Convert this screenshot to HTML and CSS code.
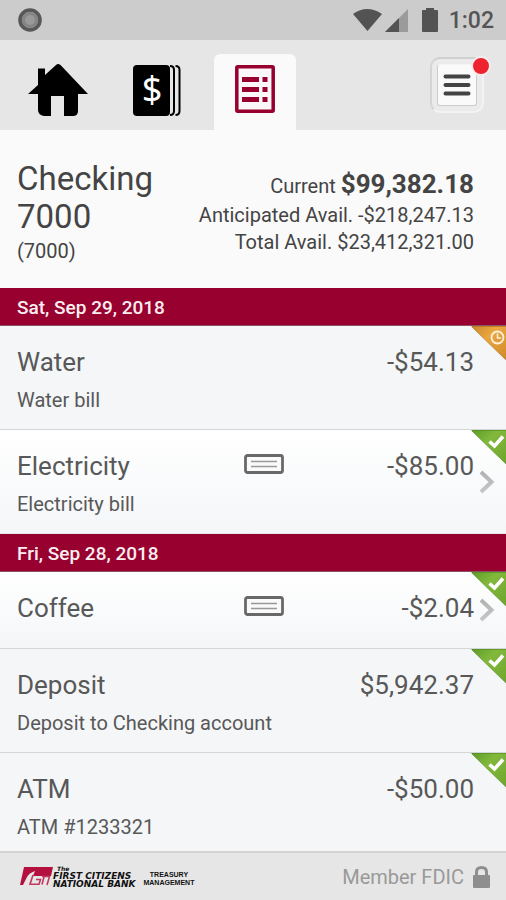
FILE: index.html
```html
<!DOCTYPE html>
<html lang="en">
<head>
<meta charset="utf-8">
<meta name="viewport" content="width=device-width, initial-scale=1">
<title>Checking 7000</title>
<link rel="stylesheet" href="styles.css">
</head>
<body>
<svg class="defs" aria-hidden="true">
  <defs>
    <linearGradient id="green" x1="0" y1="0" x2="1" y2="1"><stop offset="0" stop-color="#5c9a28"/><stop offset=".4" stop-color="#82b93c"/><stop offset="1" stop-color="#6fa52c"/></linearGradient>
    <linearGradient id="orange" x1="0" y1="0" x2="1" y2="1"><stop offset="0" stop-color="#c8862c"/><stop offset=".4" stop-color="#eba63f"/><stop offset="1" stop-color="#d08a2a"/></linearGradient>
    <linearGradient id="grey" x1="0" y1="0" x2="0" y2="1"><stop offset="0" stop-color="#b2b2b2"/><stop offset="1" stop-color="#c6c6c6"/></linearGradient>
    <symbol id="cleared" viewBox="0 0 35 35">
      <path d="M0 0H35V34Z" fill="url(#green)"/>
      <path d="M1 .5H35M1 1L35 34" fill="none" stroke="#4e8a20" stroke-opacity=".6"/>
      <path d="M18.500 11.500L23.500 16L32 6.500" fill="none" stroke="#fff" stroke-width="3.600"/>
    </symbol>
    <symbol id="pending" viewBox="0 0 35 35">
      <path d="M0 0H35V34Z" fill="url(#orange)"/>
      <path d="M1 .5H35M1 1L35 34" fill="none" stroke="#a8701f" stroke-opacity=".6"/>
      <circle cx="26.500" cy="11.500" r="6" fill="none" stroke="#fdf1dc" stroke-width="1.800"/>
      <path d="M26.500 7.500V12H30" fill="none" stroke="#fdf1dc" stroke-width="1.500"/>
    </symbol>
    <symbol id="check" viewBox="0 0 40 20">
      <rect x="1.500" y="1.500" width="37" height="17" rx="2" fill="#fafafa" stroke="#696969" stroke-width="2.800"/>
      <path d="M7 7.500H33M7 12.500H33" stroke="#999" stroke-width="1.700"/>
    </symbol>
    <symbol id="chevron" viewBox="0 0 16 24">
      <path d="M2 2L12.500 12L2 22" fill="none" stroke="url(#grey)" stroke-width="4"/>
    </symbol>
  </defs>
</svg>

<header>
  <div class="status">
    <svg width="24" height="24" viewBox="0 0 24 24" aria-hidden="true"><circle cx="12" cy="12" r="10" fill="#999" stroke="#585858" stroke-width="3.600"/><circle cx="12" cy="12" r="6.500" fill="none" stroke="#858585" stroke-width="3"/></svg>
    <div class="signals">
      <svg width="88" height="24" viewBox="0 0 88 24" aria-hidden="true">
        <path d="M0 6Q14-4 29 6L14.500 23Z" fill="#535353"/>
        <path d="M55 1V24H32Z" fill="#9b9b9b"/><path d="M46 10V24H32Z" fill="#535353"/>
        <path d="M73 0H81V2H84Q85 2 85 3V23Q85 24 84 24H70Q69 24 69 23V3Q69 2 70 2H73Z" fill="#535353"/>
      </svg>
      <time>1:02</time>
    </div>
  </div>
  <nav>
    <a class="tab" href="#home" aria-label="Home">
      <svg width="60" height="53" viewBox="0 0 60 53"><path d="M0 30L10 21V4.500H17V11L28 1Q30-1 32.500 1L60 30H50V47Q50 52 45 52H36V32H23V52H16Q10 51 10 46V30Z" fill="#000"/></svg>
    </a>
    <a class="tab" href="#accounts" aria-label="Accounts">
      <svg width="48" height="53" viewBox="0 0 48 53"><rect x="0" y="1" width="37" height="51" rx="4" fill="#000"/><path d="M37 2Q41 2 41 6V47Q41 51 37 51M42.500 2Q46.500 2 46.500 6V47Q46.500 51 42.500 51" fill="none" stroke="#000" stroke-width="2"/><text class="dollar" x="19" y="38" text-anchor="middle">$</text></svg>
    </a>
    <a class="tab active" href="#activity" aria-label="Activity" aria-current="page">
      <svg width="40" height="48" viewBox="0 0 40 48"><rect x="1.800" y="1.800" width="36.400" height="44.400" rx="1" fill="#fbf7f8" stroke="#97002f" stroke-width="3.500"/><path d="M7 14.500H24M27.500 14.500H32.500M7 24.500H24M27.500 24.500H32.500M7 34.500H24M27.500 34.500H32.500" stroke="#97002f" stroke-width="5"/></svg>
    </a>
    <button class="menu" type="button" aria-label="Menu">
      <span class="menu-face"><svg width="28" height="24" viewBox="0 0 28 24"><path d="M2.500 3.500H25.500M2.500 12H25.500M2.500 20.500H25.500" stroke="#444" stroke-width="4" stroke-linecap="round"/></svg></span>
      <span class="dot"></span>
    </button>
  </nav>
</header>

<section class="summary">
  <div class="account">
    <h1>Checking 7000</h1>
    <p>(7000)</p>
  </div>
  <div class="balances">
    <p class="current">Current <strong>$99,382.18</strong></p>
    <p>Anticipated Avail. -$218,247.13</p>
    <p>Total Avail. $23,412,321.00</p>
  </div>
</section>

<main>
  <h2>Sat, Sep 29, 2018</h2>
  <ul>
    <li class="row">
      <div class="line"><span>Water</span><span class="amount">-$54.13</span></div>
      <p>Water bill</p>
      <svg class="corner" role="img" aria-label="Pending"><use href="#pending"/></svg>
    </li>
    <li class="row linked">
      <div class="line"><span>Electricity</span><svg class="cheque"><use href="#check"/></svg><span class="amount">-$85.00</span></div>
      <p>Electricity bill</p>
      <svg class="corner" role="img" aria-label="Cleared"><use href="#cleared"/></svg>
      <svg class="chevron"><use href="#chevron"/></svg>
    </li>
  </ul>
  <h2>Fri, Sep 28, 2018</h2>
  <ul>
    <li class="row linked compact">
      <div class="line"><span>Coffee</span><svg class="cheque"><use href="#check"/></svg><span class="amount">-$2.04</span></div>
      <svg class="corner" role="img" aria-label="Cleared"><use href="#cleared"/></svg>
      <svg class="chevron"><use href="#chevron"/></svg>
    </li>
    <li class="row">
      <div class="line"><span>Deposit</span><span class="amount">$5,942.37</span></div>
      <p>Deposit to Checking account</p>
      <svg class="corner" role="img" aria-label="Cleared"><use href="#cleared"/></svg>
    </li>
    <li class="row">
      <div class="line"><span>ATM</span><span class="amount">-$50.00</span></div>
      <p>ATM #1233321</p>
      <svg class="corner" role="img" aria-label="Cleared"><use href="#cleared"/></svg>
    </li>
  </ul>
</main>

<footer>
  <div class="brand">
    <svg width="33" height="19" viewBox="0 0 33 19" aria-hidden="true"><path d="M4 0H33L31 9H13L15 4Q9 6 7 10L3 18H0Z" fill="#b3103f"/><path d="M13 8L10 17.300H19L20.500 12.500H16M22 9.500H29.500L27 18M24 10L22 17.500" fill="none" stroke="#c2385e" stroke-width="1.600"/></svg>
    <div class="bank"><span class="the">The</span><span>FIRST CITIZENS</span><span>NATIONAL BANK</span></div>
    <div class="treasury"><span>TREASURY</span><span>MANAGEMENT</span></div>
  </div>
  <div class="fdic">Member FDIC
    <svg width="17" height="22" viewBox="0 0 17 22" aria-hidden="true"><path d="M3.500 11V6Q3.500 1.500 8.500 1.500T13.500 6V11" fill="none" stroke="#8e8e8e" stroke-width="3"/><rect y="9" width="17" height="13" rx="1" fill="#8e8e8e"/></svg>
  </div>
</footer>
</body>
</html>
```

FILE: styles.css
```css
* { box-sizing: border-box; }

body {
  margin: 0;
  height: 100vh;
  display: flex;
  flex-direction: column;
  background: #fafafa;
  color: #444;
  font-family: Roboto, "Liberation Sans", sans-serif;
  font-size: 20px;
}

h1, h2, p, ul { margin: 0; padding: 0; font-weight: 400; }
ul { list-style: none; }
svg { display: block; flex: none; }
.defs { position: absolute; width: 0; height: 0; }

header, .summary, footer { flex: none; }

.status {
  height: 40px;
  padding: 0 12px 0 18px;
  display: flex;
  align-items: center;
  justify-content: space-between;
  background: #ccc;
}
.signals { display: flex; align-items: center; gap: 8px; }
time { font-size: 23px; font-weight: 500; color: #555; }

nav {
  height: 90px;
  padding: 14px 22px 0 16px;
  display: flex;
  background: #e6e6e6;
}
.tab {
  width: 84px;
  margin-right: 15px;
  display: flex;
  align-items: center;
  justify-content: center;
  padding-bottom: 4px;
  border-radius: 6px 6px 0 0;
}
.tab.active { width: 82px; background: #fafafa; margin: 0; padding-bottom: 6px; }
.dollar { fill: #fff; font-family: "Noto Sans", sans-serif; font-size: 36px; }

.menu {
  position: relative;
  width: 54px;
  height: 56px;
  margin: 3px 0 0 auto;
  padding: 5px;
  border: 2px solid #f3f3f3;
  border-top-color: #cfcfcf;
  border-left-color: #d4d4d4;
  border-radius: 10px;
  background: #ebebeb;
}
.menu-face {
  height: 100%;
  display: flex;
  align-items: center;
  justify-content: center;
  border: 1px solid #ccc;
  border-top-color: #f4f4f4;
  border-radius: 3px;
  background: #fafafa;
}
.dot {
  position: absolute;
  top: -3px;
  right: -9px;
  width: 20px;
  height: 20px;
  border: 2px solid #f6eeee;
  border-radius: 50%;
  background: #ee2330;
}

.summary {
  display: flex;
  justify-content: space-between;
  padding: 30px 32px 22px 17px;
  min-height: 158px;
}
.account { width: 150px; }
h1 { font-size: 33px; line-height: 38px; }
.account p { line-height: 30px; }
.balances { text-align: right; line-height: 27px; padding-top: 8px; }
.balances .current { line-height: 32px; }
.balances strong { font-size: 26px; font-weight: 700; }

main { flex: 1; min-height: 0; overflow-y: auto; scrollbar-width: none; }
h2 {
  height: 38px;
  padding-left: 17px;
  background: #97002f;
  border-bottom: 1px solid #8c5064;
  color: #fbeef0;
  font-size: 19px;
  font-weight: 500;
  line-height: 40px;
}
.row {
  position: relative;
  padding: 20px 32px 16px 17px;
  background: #f4f6f8;
  border-bottom: 1px solid #d3d5d6;
  color: #585858;
}
.row:last-child { border-bottom-color: #e4e6e8; }
.row.linked { background: linear-gradient(#fff, #f4f6f8); }
.row.compact { padding-bottom: 24px; }
.line {
  display: grid;
  grid-template-columns: 6fr 40px 5fr;
  align-items: center;
  font-size: 26px;
  line-height: 32px;
}
.amount { grid-column: 3; text-align: right; }
.row p { margin-top: 10px; line-height: 25px; }
.cheque { width: 40px; height: 20px; margin-bottom: 4px; }
.corner { position: absolute; top: 0; right: 0; width: 35px; height: 35px; }
.chevron { position: absolute; top: 50%; right: 11px; width: 16px; height: 24px; margin-top: -12px; }

footer {
  height: 49px;
  padding: 0 16px 0 20px;
  display: flex;
  align-items: center;
  justify-content: space-between;
  background: #e6e6e6;
  border-top: 2px solid #d2d2d2;
}
.brand { display: flex; align-items: center; }
.bank, .treasury {
  display: flex;
  flex-direction: column;
  color: #111;
  font-weight: 700;
  line-height: 8px;
}
.bank { font-family: "DejaVu Sans", sans-serif; font-size: 9px; font-style: italic; }
.the { font-size: 6px; line-height: 6px; padding-left: 4px; }
.treasury {
  margin-left: 8px;
  padding-top: 5px;
  font-family: "Liberation Sans", sans-serif;
  font-size: 7px;
  text-align: center;
}
.fdic { display: flex; align-items: center; gap: 9px; color: #999; }
```
